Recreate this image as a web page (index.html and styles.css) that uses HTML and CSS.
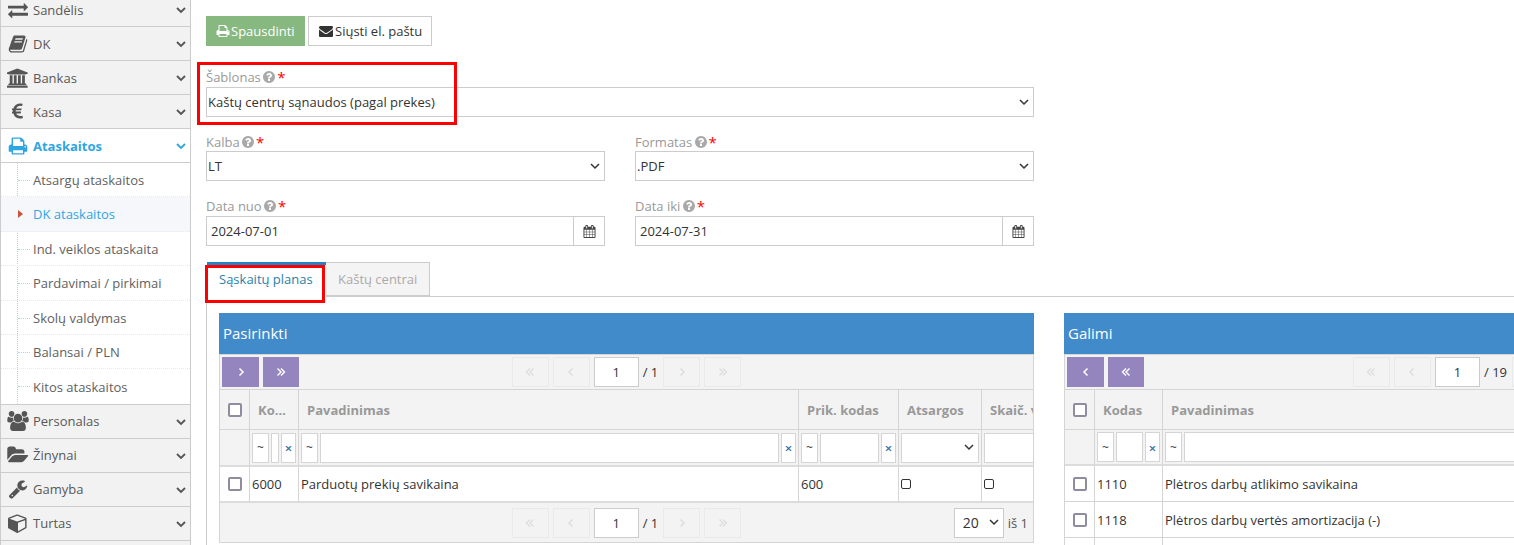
FILE: index.html
```html
<!DOCTYPE html>
<html lang="lt">
<head>
<meta charset="utf-8">
<title>Ataskaitos</title>
<link rel="stylesheet" href="styles.css">
</head>
<body>
<svg class="defs" aria-hidden="true">
<symbol id="i-exchange" viewBox="0 0 1792 1792"><path d="M1792 1184v192q0 13-9.5 22.5t-22.5 9.5h-1376v192q0 13-9.5 22.5t-22.5 9.5q-12 0-24-10l-319-320q-9-9-9-22 0-14 9-23l320-320q9-9 23-9 13 0 22.5 9.5t9.5 22.5v192h1376q13 0 22.5 9.5t9.5 22.5zm0-544q0 14-9 23l-320 320q-9 9-23 9-13 0-22.5-9.5t-9.5-22.5v-192h-1376q-13 0-22.5-9.5t-9.5-22.5v-192q0-13 9.5-22.5t22.5-9.5h1376v-192q0-14 9-23t23-9q12 0 24 10l319 319q9 9 9 23z"/></symbol>
<symbol id="i-book" viewBox="0 0 1792 1792"><path d="M1703 478q40 57 18 129l-275 906q-19 64-76.5 107.5t-122.5 43.5h-923q-77 0-148.5-53.5t-99.5-131.5q-24-67-2-127 0-4 3-27t4-37q1-8-3-21.5t-3-19.5q2-11 8-21t16.5-23.5 16.5-23.5q23-38 45-91.5t30-91.5q3-10 .5-30t-.5-28q3-11 17-28t17-23q21-36 42-92t25-90q1-9-2.5-32t.5-28q4-13 22-30.5t22-22.5q19-26 42.5-84.5t27.5-96.5q1-8-3-25.5t-2-26.5q2-8 9-18t18-23 17-21q8-12 16.5-30.5t15-35 16-36 19.5-32 26.5-23.5 36-11.5 47.5 5.5l-1 3q38-9 51-9h761q74 0 114 56t18 130l-274 906q-36 119-71.5 153.5t-128.5 34.5h-869q-27 0-38 15-11 16-1 43 24 70 144 70h923q29 0 56-15.5t35-41.5l300-987q7-22 5-57 38 15 59 43zm-1064 2q-4 13 2 22.5t20 9.5h608q13 0 25.5-9.5t16.5-22.5l21-64q4-13-2-22.5t-20-9.5h-608q-13 0-25.5 9.5t-16.5 22.5zm-83 256q-4 13 2 22.5t20 9.5h608q13 0 25.5-9.5t16.5-22.5l21-64q4-13-2-22.5t-20-9.5h-608q-13 0-25.5 9.5t-16.5 22.5z"/></symbol>
<symbol id="i-bank" viewBox="0 0 2048 1792"><path d="M960 0l960 384v128h-128q0 26-20.5 45t-48.5 19h-1526q-28 0-48.5-19t-20.5-45h-128v-128zm-704 640h256v768h128v-768h256v768h128v-768h256v768h128v-768h256v768h59q28 0 48.5 19t20.5 45v64h-1664v-64q0-26 20.5-45t48.5-19h59v-768zm1595 960q28 0 48.5 19t20.5 45v128h-1920v-128q0-26 20.5-45t48.5-19h1782z"/></symbol>
<symbol id="i-euro" viewBox="0 0 1024 1792"><path d="M976 1277l35 159q3 12-3 22.5t-17 14.5l-5 1q-4 2-10.5 3.5t-16 4.5-21.5 5.5-25.5 5-30 5-33.5 4.5-36.5 3-38.5 1q-234 0-409-130.5t-238-351.5h-95q-13 0-22.5-9.5t-9.5-22.5v-113q0-13 9.5-22.5t22.5-9.5h66q-2-57 1-105h-67q-14 0-23-9t-9-23v-114q0-14 9-23t23-9h98q67-210 243.5-338t400.5-128q102 0 194 23 11 3 20 15 6 11 3 24l-43 159q-3 13-14 19.5t-24 2.5l-4-1q-4-1-11.5-2.5l-17.5-3.5-22.5-3.5-26-3-29-2.5-29.5-1q-126 0-226 64t-150 176h468q16 0 25 12 10 12 7 26l-24 114q-5 26-32 26h-488q-3 47 0 105h459q15 0 25 12 9 12 6 27l-24 112q-2 11-11 18.5t-20 7.5h-387q48 117 149.5 185.5t228.5 68.5q18 0 36-1.5t33.5-3.5 29.5-4.5 24.5-5 18.5-4.5l12-3 5-2q13-5 26 2 12 7 15 21z"/></symbol>
<symbol id="i-print" viewBox="0 0 1792 1792"><path d="M448 1536h896v-256h-896v256zm0-640h896v-384h-160q-40 0-68-28t-28-68v-160h-640v640zm1152 64q0-26-19-45t-45-19-45 19-19 45 19 45 45 19 45-19 19-45zm128 0v416q0 13-9.5 22.5t-22.5 9.5h-224v160q0 40-28 68t-68 28h-960q-40 0-68-28t-28-68v-160h-224q-13 0-22.5-9.5t-9.5-22.5v-416q0-79 56.5-135.5t135.5-56.5h64v-544q0-40 28-68t68-28h672q40 0 88 20t76 48l152 152q28 28 48 76t20 88v256h64q79 0 135.5 56.5t56.5 135.5z"/></symbol>
<symbol id="i-users" viewBox="0 0 1920 1792"><path d="M593 896q-162 5-265 128h-134q-82 0-138-40.500t-56-118.500q0-353 124-353 6 0 43.500 21t97.500 42.500 119 21.500q67 0 133-23-5 37-5 66 0 139 81 256zm1071 637q0 120-73 189.500t-194 69.500h-874q-121 0-194-69.500t-73-189.500q0-53 3.500-103.500t14-109 26.500-108.500 43-97.500 62-81 85.500-53.500 111.500-20q10 0 43 21.500t73 48 107 48 135 21.500 135-21.500 107-48 73-48 43-21.500q61 0 111.500 20t85.500 53.500 62 81 43 97.500 26.500 108.500 14 109 3.500 103.500zm-1024-1277q0 106-75 181t-181 75-181-75-75-181 75-181 181-75 181 75 75 181zm704 384q0 159-112.500 271.500t-271.500 112.500-271.500-112.500-112.500-271.500 112.500-271.500 271.500-112.500 271.500 112.500 112.500 271.500zm576 225q0 78-56 118.500t-138 40.500h-134q-103-123-265-128 81-117 81-256 0-29-5-66 66 23 133 23 59 0 119-21.500t97.500-42.500 43.500-21q124 0 124 353zm-128-609q0 106-75 181t-181 75-181-75-75-181 75-181 181-75 181 75 75 181z"/></symbol>
<symbol id="i-folder" viewBox="0 0 1920 1792"><path d="M1879 952q0 31-31 66l-336 396q-43 51-120.500 86.500t-143.500 35.500h-1088q-34 0-60.500-13t-26.500-43q0-31 31-66l336-396q43-51 120.500-86.500t143.500-35.500h1088q34 0 60.500 13t26.500 43zm-343-344v160h-832q-94 0-197 47.500t-164 119.500l-337 396-5 6q0-4-.5-12.500t-.5-12.500v-960q0-92 66-158t158-66h320q92 0 158 66t66 158v32h544q92 0 158 66t66 158z"/></symbol>
<symbol id="i-wrench" viewBox="0 0 1792 1792"><path d="M448 1472q0-26-19-45t-45-19-45 19-19 45 19 45 45 19 45-19 19-45zm644-420l-682 682q-37 37-90 37-52 0-91-37l-106-108q-38-36-38-90 0-53 38-91l681-681q39 98 114.500 173.500t173.500 114.500zm634-435q0 39-23 106-47 134-164.500 217.500t-258.500 83.500q-185 0-316.500-131.500t-131.500-316.500 131.500-316.500 316.500-131.500q58 0 121.500 16.500t107.500 46.500q16 11 16 28t-16 28l-293 169v224l193 107q5-3 79-48.500t135.500-81 70.500-35.500q15 0 23.500 10t8.500 25z"/></symbol>
<symbol id="i-cube" viewBox="0 0 1792 1792"><path d="M896 1629l640-349v-636l-640 233v752zm-64-865l698-254-698-254-698 254zm832-252v768q0 35-18 65t-49 47l-704 384q-28 16-61 16t-61-16l-704-384q-31-17-49-47t-18-65v-768q0-40 23-73t61-47l704-256q22-8 44-8t44 8l704 256q38 14 61 47t23 73z"/></symbol>
<symbol id="i-envelope" viewBox="0 0 1792 1792"><path d="M1792 710v794q0 66-47 113t-113 47h-1472q-66 0-113-47t-47-113v-794q44 49 101 87 362 246 497 345 57 42 92.500 65.500t94.500 48 110 24.500h2q51 0 110-24.500t94.500-48 92.500-65.500q170-123 498-345 57-39 100-87zm0-294q0 79-49 151t-122 123q-376 261-468 325-10 7-42.500 30.500t-54 38-52 32.500-57.500 27-50 9h-2q-23 0-50-9t-57.500-27-52-32.500-54-38-42.500-30.500q-91-64-262-182.500t-205-142.500q-62-42-117-115.500t-55-136.500q0-78 41.500-130t118.500-52h1472q65 0 112.500 45t47.500 115z"/></symbol>
<symbol id="i-help" viewBox="0 0 1792 1792"><path d="M1024 1376v-192q0-14-9-23t-23-9h-192q-14 0-23 9t-9 23v192q0 14 9 23t23 9h192q14 0 23-9t9-23zm256-672q0-88-55.500-163t-138.500-116-170-41q-243 0-371 213-15 24 8 42l132 100q7 6 19 6 16 0 25-12 53-68 86-92 34-24 86-24 48 0 85.500 26t37.500 59q0 38-20 61t-68 45q-63 28-115.500 86.500t-52.500 125.500v36q0 14 9 23t23 9h192q14 0 23-9t9-23q0-19 21.500-49.500t54.500-49.500q32-18 49-28.500t46-35 44.500-48 28-60.500 12.500-81zm384 192q0 209-103 385.500t-279.500 279.500-385.500 103-385.500-103-279.500-279.500-103-385.500 103-385.500 279.500-279.500 385.500-103 385.500 103 279.500 279.500 103 385.500z"/></symbol>
<symbol id="i-cal" viewBox="0 0 1792 1792"><path d="M192 1664h288v-288h-288v288zm352 0h320v-288h-320v288zm-352-352h288v-320h-288v320zm352 0h320v-320h-320v320zm-352-384h288v-288h-288v288zm736 736h320v-288h-320v288zm-384-736h320v-288h-320v288zm768 736h288v-288h-288v288zm-384-352h320v-320h-320v320zm-352-864v-288q0-13-9.500-22.500t-22.500-9.500h-64q-13 0-22.500 9.500t-9.500 22.500v288q0 13 9.500 22.500t22.500 9.500h64q13 0 22.500-9.500t9.500-22.500zm736 864h288v-320h-288v320zm-384-384h320v-288h-320v288zm384 0h288v-288h-288v288zm32-480v-288q0-13-9.500-22.500t-22.500-9.500h-64q-13 0-22.500 9.500t-9.500 22.500v288q0 13 9.500 22.500t22.500 9.500h64q13 0 22.500-9.500t9.500-22.500zm384-64v1280q0 52-38 90t-90 38h-1408q-52 0-90-38t-38-90v-1280q0-52 38-90t90-38h128v-96q0-66 47-113t113-47h64q66 0 113 47t47 113v96h384v-96q0-66 47-113t113-47h64q66 0 113 47t47 113v96h128q52 0 90 38t38 90z"/></symbol>
<symbol id="i-down" viewBox="0 0 10 7"><path d="M1 1l4 4 4-4" fill="none" stroke="currentColor" stroke-width="1.800"/></symbol>
<symbol id="i-r" viewBox="0 0 10 10"><path d="M3.500 1.500l3.500 3.500-3.500 3.500" fill="none" stroke="currentColor" stroke-width="1.500"/></symbol>
<symbol id="i-l" viewBox="0 0 10 10"><path d="M6.500 1.500l-3.500 3.500 3.500 3.500" fill="none" stroke="currentColor" stroke-width="1.500"/></symbol>
<symbol id="i-rr" viewBox="0 0 10 10"><path d="M1.500 1.500l3.500 3.500-3.500 3.500M5 1.500l3.500 3.500-3.500 3.500" fill="none" stroke="currentColor" stroke-width="1.400"/></symbol>
<symbol id="i-ll" viewBox="0 0 10 10"><path d="M5 1.500l-3.500 3.500 3.500 3.500M8.500 1.500l-3.500 3.500 3.500 3.500" fill="none" stroke="currentColor" stroke-width="1.400"/></symbol>
</svg>

<div class="page">
  <nav class="sidebar">
    <ul class="menu">
      <li class="item"><span class="mi"><svg class="mi-svg"><use href="#i-exchange"/></svg></span><span class="mt">Sandėlis</span><svg class="chev"><use href="#i-down"/></svg></li>
      <li class="item"><span class="mi"><svg class="mi-svg"><use href="#i-book"/></svg></span><span class="mt">DK</span><svg class="chev"><use href="#i-down"/></svg></li>
      <li class="item"><span class="mi"><svg class="mi-svg mi-wide"><use href="#i-bank"/></svg></span><span class="mt">Bankas</span><svg class="chev"><use href="#i-down"/></svg></li>
      <li class="item"><span class="mi"><svg class="mi-svg mi-euro"><use href="#i-euro"/></svg></span><span class="mt">Kasa</span><svg class="chev"><use href="#i-down"/></svg></li>
      <li class="item item-open"><span class="mi"><svg class="mi-svg"><use href="#i-print"/></svg></span><span class="mt">Ataskaitos</span><svg class="chev"><use href="#i-down"/></svg></li>
      <li class="subs">
        <ul class="sublist">
          <li class="sub">Atsargų ataskaitos</li>
          <li class="sub sub-active">DK ataskaitos</li>
          <li class="sub">Ind. veiklos ataskaita</li>
          <li class="sub">Pardavimai / pirkimai</li>
          <li class="sub">Skolų valdymas</li>
          <li class="sub">Balansai / PLN</li>
          <li class="sub">Kitos ataskaitos</li>
        </ul>
      </li>
      <li class="item"><span class="mi"><svg class="mi-svg mi-wide"><use href="#i-users"/></svg></span><span class="mt">Personalas</span><svg class="chev"><use href="#i-down"/></svg></li>
      <li class="item"><span class="mi"><svg class="mi-svg mi-wide"><use href="#i-folder"/></svg></span><span class="mt">Žinynai</span><svg class="chev"><use href="#i-down"/></svg></li>
      <li class="item"><span class="mi"><svg class="mi-svg"><use href="#i-wrench"/></svg></span><span class="mt">Gamyba</span><svg class="chev"><use href="#i-down"/></svg></li>
      <li class="item"><span class="mi"><svg class="mi-svg"><use href="#i-cube"/></svg></span><span class="mt">Turtas</span><svg class="chev"><use href="#i-down"/></svg></li>
      <li class="item"></li>
    </ul>
  </nav>

  <main class="main">
    <div class="actions">
      <button class="btn btn-green"><svg class="btn-ic"><use href="#i-print"/></svg>Spausdinti</button>
      <button class="btn btn-white"><svg class="btn-ic"><use href="#i-envelope"/></svg>Siųsti el. paštu</button>
    </div>

    <form class="form">
      <div class="field field-full">
        <label class="lbl">Šablonas <svg class="help"><use href="#i-help"/></svg><span class="req">*</span></label>
        <select class="ctl"><option>Kaštų centrų sąnaudos (pagal prekes)</option></select>
      </div>
      <div class="field field-mid">
        <label class="lbl">Kalba <svg class="help"><use href="#i-help"/></svg><span class="req">*</span></label>
        <select class="ctl"><option>LT</option></select>
      </div>
      <div class="field field-mid">
        <label class="lbl">Formatas <svg class="help"><use href="#i-help"/></svg><span class="req">*</span></label>
        <select class="ctl"><option>.PDF</option></select>
      </div>
      <div class="field field-date">
        <label class="lbl">Data nuo <svg class="help"><use href="#i-help"/></svg><span class="req">*</span></label>
        <div class="date"><input class="date-in" value="2024-07-01"><span class="date-btn"><svg class="cal"><use href="#i-cal"/></svg></span></div>
      </div>
      <div class="field field-date">
        <label class="lbl">Data iki <svg class="help"><use href="#i-help"/></svg><span class="req">*</span></label>
        <div class="date"><input class="date-in" value="2024-07-31"><span class="date-btn"><svg class="cal"><use href="#i-cal"/></svg></span></div>
      </div>
    </form>

    <div class="tabs">
      <a class="tab tab-active">Sąskaitų planas</a>
      <a class="tab">Kaštų centrai</a>
    </div>

    <section class="tab-body">
      <div class="panel">
        <h3 class="panel-title">Pasirinkti</h3>
        <div class="bar">
          <div class="bar-left">
            <button class="pbtn"><svg class="pg-ic"><use href="#i-r"/></svg></button>
            <button class="pbtn"><svg class="pg-ic"><use href="#i-rr"/></svg></button>
          </div>
          <div class="pager">
            <span class="pg"><svg class="pg-ic"><use href="#i-ll"/></svg></span>
            <span class="pg"><svg class="pg-ic"><use href="#i-l"/></svg></span>
            <input class="pg-in" value="1">
            <span class="pg-of">/ 1</span>
            <span class="pg"><svg class="pg-ic"><use href="#i-r"/></svg></span>
            <span class="pg"><svg class="pg-ic"><use href="#i-rr"/></svg></span>
          </div>
          <div></div>
        </div>
        <div class="tbl-wrap">
          <table class="tbl tbl-a">
            <colgroup><col class="w30"><col class="w49"><col class="w500"><col class="w100"><col class="w83"><col class="w100"></colgroup>
            <thead>
              <tr class="hd">
                <th class="cb"><input type="checkbox" class="chk"></th>
                <th>Kodas</th><th>Pavadinimas</th><th>Prik. kodas</th><th>Atsargos</th><th>Skaič. vnt.</th>
              </tr>
              <tr class="flt">
                <td></td>
                <td><div class="fl"><span class="fl-op">~</span><input class="fl-in"><span class="fl-x">×</span></div></td>
                <td><div class="fl"><span class="fl-op">~</span><input class="fl-in"><span class="fl-x">×</span></div></td>
                <td><div class="fl"><span class="fl-op">~</span><input class="fl-in"><span class="fl-x">×</span></div></td>
                <td><div class="fl"><select class="fl-sel"><option></option></select></div></td>
                <td><div class="fl"><input class="fl-in"></div></td>
              </tr>
            </thead>
            <tbody>
              <tr class="row">
                <td class="cb"><input type="checkbox" class="chk"></td>
                <td>6000</td><td>Parduotų prekių savikaina</td><td>600</td>
                <td><input type="checkbox" class="chk-s"></td><td><input type="checkbox" class="chk-s"></td>
              </tr>
            </tbody>
          </table>
        </div>
        <div class="bar bar-foot">
          <div></div>
          <div class="pager">
            <span class="pg"><svg class="pg-ic"><use href="#i-ll"/></svg></span>
            <span class="pg"><svg class="pg-ic"><use href="#i-l"/></svg></span>
            <input class="pg-in" value="1">
            <span class="pg-of">/ 1</span>
            <span class="pg"><svg class="pg-ic"><use href="#i-r"/></svg></span>
            <span class="pg"><svg class="pg-ic"><use href="#i-rr"/></svg></span>
          </div>
          <div class="foot-right"><select class="size"><option>20</option></select><span class="of">iš 1</span></div>
        </div>
      </div>

      <div class="panel">
        <h3 class="panel-title">Galimi</h3>
        <div class="bar">
          <div class="bar-left">
            <button class="pbtn"><svg class="pg-ic"><use href="#i-l"/></svg></button>
            <button class="pbtn"><svg class="pg-ic"><use href="#i-ll"/></svg></button>
          </div>
          <div class="pager">
            <span class="pg"><svg class="pg-ic"><use href="#i-ll"/></svg></span>
            <span class="pg"><svg class="pg-ic"><use href="#i-l"/></svg></span>
            <input class="pg-in" value="1">
            <span class="pg-of">/ 19</span>
            <span class="pg"><svg class="pg-ic"><use href="#i-r"/></svg></span>
            <span class="pg"><svg class="pg-ic"><use href="#i-rr"/></svg></span>
          </div>
          <div></div>
        </div>
        <div class="tbl-wrap">
          <table class="tbl tbl-b">
            <colgroup><col class="w30"><col class="w68"><col class="w500"><col class="w100"><col class="w100"></colgroup>
            <thead>
              <tr class="hd">
                <th class="cb"><input type="checkbox" class="chk"></th>
                <th>Kodas</th><th>Pavadinimas</th><th></th><th></th>
              </tr>
              <tr class="flt">
                <td></td>
                <td><div class="fl"><span class="fl-op">~</span><input class="fl-in"><span class="fl-x">×</span></div></td>
                <td><div class="fl"><span class="fl-op">~</span><input class="fl-in"><span class="fl-x">×</span></div></td>
                <td></td><td></td>
              </tr>
            </thead>
            <tbody>
              <tr class="row row-thin"><td class="cb"><input type="checkbox" class="chk"></td><td>1110</td><td>Plėtros darbų atlikimo savikaina</td><td></td><td></td></tr>
              <tr class="row row-thin"><td class="cb"><input type="checkbox" class="chk"></td><td>1118</td><td>Plėtros darbų vertės amortizacija (-)</td><td></td><td></td></tr>
              <tr class="row row-thin"><td class="cb"></td><td></td><td></td><td></td><td></td></tr>
            </tbody>
          </table>
        </div>
      </div>
    </section>

    <div class="mark mark-a"></div>
    <div class="mark mark-b"></div>
  </main>
</div>
</body>
</html>
```

FILE: styles.css
```css
* { box-sizing: border-box; }
html, body { margin: 0; height: 100%; overflow: hidden; background: #fff; }
body { font-family: "Open Sans", sans-serif; font-size: 13px; color: #333; }
.defs { display: none; }
ul { list-style: none; margin: 0; padding: 0; }

.page { display: flex; height: 545px; overflow: hidden; }

/* Sidebar */
.sidebar { width: 191px; flex: none; margin-top: -7px; border-left: 1px solid #ccc; border-right: 1px solid #ccc; height: 560px; }
.item { display: flex; align-items: center; height: 34px; background: #f2f2f2; border-bottom: 1px solid #ccc; color: #585858; padding-right: 4px; }
.mi { width: 32px; flex: none; display: flex; justify-content: center; color: #555; padding-left: 1px; }
.mi-svg { width: 20px; height: 20px; fill: currentColor; display: block; }
.mi-wide { width: 22px; }
.mi-euro { width: 11px; }
.mt { flex: 1; }
.chev { width: 10px; height: 7px; color: #555; margin-top: 2px; }
.item-open { background: #fff; color: #2ea6e2; font-weight: 700; }
.item-open .mi, .item-open .chev { color: #2ea6e2; }
.subs { background: #fff; border-bottom: 1px solid #ccc; }
.sublist { position: relative; }
.sublist::before { content: ""; position: absolute; left: 16px; top: 0; bottom: 0; border-left: 1px dotted #a8d4f0; }
.sub { position: relative; height: 34.4px; line-height: 34.6px; padding-left: 32px; color: #616161; border-bottom: 1px dotted #e0ecf5; }
.sub:last-child { border-bottom: 0; line-height: 36px; }
.sub::before { content: ""; position: absolute; left: 17px; top: 17px; width: 12px; border-top: 1px dotted #a8d4f0; }
.sub-active { background: #f6f7fa; color: #2ea6e2; }
.sub-active::before { display: none; }
.sub-active::after { content: ""; position: absolute; left: 17px; top: 13px; border-left: 5px solid #c9543c; border-top: 4px solid transparent; border-bottom: 4px solid transparent; }

/* Main */
.main { position: relative; flex: 1; min-width: 0; padding: 16px 0 0 15px; overflow: hidden; }
.actions { display: flex; gap: 3px; height: 30px; }
.btn { display: flex; align-items: center; height: 30px; padding: 0 0 0 10px; font: 13px "Open Sans", sans-serif; white-space: nowrap; }
.btn-ic { width: 14px; height: 14px; fill: currentColor; margin-right: 2px; flex: none; }
.btn-green { width: 99px; background: #87b87f; border: 0; color: #fff; }
.btn-green .btn-ic { margin-right: 1px; }
.btn-white { width: 124px; background: #fff; border: 1px solid #ccc; color: #333; }

.form { display: grid; grid-template-columns: 399px 399px; column-gap: 30px; row-gap: 14px; width: 828px; margin-top: 21px; }
.field-full { grid-column: 1 / 3; }
.field-mid .lbl { padding-top: 2px; }
.field-date { margin-top: 1px; }
.lbl { display: flex; align-items: center; height: 20px; color: #999; white-space: pre; }
.help { width: 14px; height: 14px; fill: #a9a9a9; margin-left: -2px; }
.req { color: #f00; font-size: 15px; line-height: 20px; margin-left: 1px; }
.ctl, .fl-sel, .size {
  appearance: none;
  background: #fff url("data:image/svg+xml,%3Csvg xmlns='http://www.w3.org/2000/svg' width='10' height='7'%3E%3Cpath d='M1 1l4 4 4-4' fill='none' stroke='%23333' stroke-width='1.500'/%3E%3C/svg%3E") no-repeat right 4px center;
  border-radius: 0;
  outline: 0;
}
.ctl { display: block; width: 100%; height: 30px; border: 1px solid #ccc; font: 13px "Open Sans", sans-serif; color: #333; padding: 0 0 0 1px; }
.date { display: flex; height: 30px; border: 1px solid #ccc; }
.date-in { flex: 1; min-width: 0; border: 0; padding: 0 4px; font: 13px "Open Sans", sans-serif; color: #333; outline: 0; }
.date-btn { width: 31px; border-left: 1px solid #ccc; display: flex; align-items: center; justify-content: center; }
.cal { width: 13px; height: 13px; fill: #444; }

/* Tabs */
.tabs { display: flex; margin-top: 16px; padding-left: 1px; height: 35px; }
.tab { height: 34px; line-height: 33px; padding: 0 0 0 12px; border: 1px solid #ccc; border-left: 0; background: #f4f4f4; color: #aaa; white-space: nowrap; }
.tab-active { width: 119px; background: #fff; color: #2b7fa8; border: 0; border-top: 3px solid #2283c5; line-height: 28px; height: 35px; position: relative; z-index: 1; }
.tab:not(.tab-active) { width: 104px; }
.tab-body { display: flex; gap: 30px; margin-top: -1px; border-top: 1px solid #ccc; border-left: 1px solid #ccc; padding: 16px 0 0 12px; width: 1400px; height: 260px; }

/* Panels */
.panel { width: 815px; flex: none; }
.panel-title { margin: 0; height: 41px; line-height: 41px; background: #428bca; color: #fff; font-size: 15px; font-weight: 400; padding-left: 4px; }
.bar { display: grid; grid-template-columns: 1fr auto 1fr; align-items: center; height: 35px; background: #f3f3f3; border: 1px solid #d5d5d5; border-bottom: 0; }
.bar-left { display: flex; gap: 4px; padding-left: 2px; }
.pbtn { width: 37px; height: 30px; padding: 0; border: 0; background: #9585bf; color: #fff; display: flex; align-items: center; justify-content: center; }
.pbtn:last-child { width: 36px; }
.pg-ic { width: 10px; height: 10px; display: block; }
.pager { display: flex; align-items: center; gap: 4px; }
.pg { width: 37px; height: 30px; border: 1px solid #e9e9e9; color: #ddd; display: flex; align-items: center; justify-content: center; }
.pg-in { width: 45px; height: 30px; border: 1px solid #ccc; text-align: center; font: 13px "Open Sans", sans-serif; color: #333; padding: 0; background: #fff; outline: 0; }
.pg-of { margin-right: 1px; }

.tbl-wrap { overflow: hidden; border-left: 1px solid #d5d5d5; border-right: 1px solid #d5d5d5; }
.tbl { table-layout: fixed; border-collapse: separate; border-spacing: 0; }
.tbl-a { width: 862px; }
.tbl-b { width: 798px; }
.w30 { width: 30px; } .w49 { width: 49px; } .w68 { width: 68px; } .w83 { width: 83px; } .w100 { width: 100px; } .w500 { width: 500px; }
.tbl th, .tbl td { border-right: 1px solid #d5d5d5; padding: 0; }
.hd th { height: 41px; background: #f3f3f3; border-top: 1px solid #d5d5d5; border-bottom: 1px solid #d5d5d5; color: #999; font-weight: 700; text-align: left; padding: 0 8px; white-space: nowrap; overflow: hidden; text-overflow: ellipsis; }
.hd th:last-child { text-overflow: clip; }
.hd th.cb { padding: 0; }
.cb { text-align: center; }
.flt td { height: 36px; background: #f3f3f3; border-bottom: 2px solid #dcdcdc; }
.tbl-a .flt td { height: 37px; }
.fl { display: flex; gap: 2px; padding: 0 2px; height: 30px; overflow: hidden; }
.fl-op, .fl-x { flex: none; border: 1px solid #d5d5d5; background: #fff; display: flex; align-items: center; justify-content: center; font-size: 12px; color: #444; }
.fl-op { width: 17px; }
.fl-x { width: 15px; color: #2a6ea6; font-size: 13px; font-weight: 600; padding-top: 1px; }
.fl-in { flex: 1; min-width: 0; height: 30px; border: 1px solid #d5d5d5; padding: 0; background: #fff; outline: 0; }
.fl-sel { width: 100%; height: 30px; border: 1px solid #d5d5d5; padding: 0; }
.row td { height: 36px; background: #fff; border-bottom: 2px solid #dcdcdc; padding: 0 2px; white-space: nowrap; overflow: hidden; }
.row td.cb { padding: 0; }
.row-thin td { border-bottom: 1px solid #d5d5d5; }
.chk { appearance: none; display: block; margin: 0 auto; width: 14px; height: 14px; border: 2px solid #8f8ca0; border-radius: 2px; background: #fff; }
.chk-s { appearance: none; display: block; margin: 0; width: 10px; height: 10px; border: 1px solid #333; border-radius: 2px; background: #fff; }

.bar-foot { height: 40px; border-top: 0; border-bottom: 1px solid #d5d5d5; }
.foot-right { display: flex; align-items: center; justify-content: flex-end; gap: 4px; padding-right: 5px; }
.size { width: 50px; height: 30px; border: 1px solid #ccc; font: 14px "Open Sans", sans-serif; color: #333; padding: 0 0 0 8px; }
.of { color: #555; }

/* Highlights drawn over the form */
.mark { position: absolute; border: 3px solid #f00; pointer-events: none; z-index: 2; }
.mark-a { left: 6px; top: 62px; width: 260px; height: 63px; }
.mark-b { left: 14px; top: 265px; width: 120px; height: 38px; }
```
